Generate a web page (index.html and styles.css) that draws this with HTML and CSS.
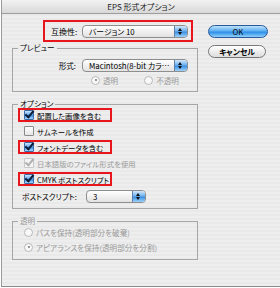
FILE: index.html
```html
<!DOCTYPE html>
<html lang="ja">
<head>
    <meta charset="UTF-8">
    <title>EPS 形式オプション</title>
    <link rel="stylesheet" href="styles.css">
</head>
<body>

<div class="window">
    <div class="titlebar">EPS 形式オプション</div>

    <div class="content">
        <div class="main">
            <!-- 互換性 -->
            <div class="compat mark">
                <span class="label">互換性:</span>
                <div class="popup wide"><span>バージョン 10</span><i class="arrows"></i></div>
            </div>

            <!-- プレビュー -->
            <div class="group preview">
                <span class="legend">プレビュー</span>
                <div class="field">
                    <span class="label">形式:</span>
                    <div class="popup wide"><span>Macintosh(8-bit カラ…</span><i class="arrows"></i></div>
                </div>
                <div class="radios">
                    <span class="radio on dim"><i></i>透明</span>
                    <span class="radio dim"><i></i>不透明</span>
                </div>
            </div>

            <!-- オプション -->
            <div class="group options">
                <span class="legend">オプション</span>
                <div class="check mark first"><i class="box on"></i>配置した画像を含む</div>
                <div class="check"><i class="box"></i>サムネールを作成</div>
                <div class="check mark"><i class="box on"></i>フォントデータを含む</div>
                <div class="check dim"><i class="box tick"></i>日本語版のファイル形式を使用</div>
                <div class="check mark"><i class="box on"></i>CMYK ポストスクリプト</div>
                <div class="field ps">
                    <span class="label">ポストスクリプト:</span>
                    <div class="popup narrow"><span>3</span><i class="arrows"></i></div>
                </div>
            </div>

            <!-- 透明 -->
            <div class="group transp">
                <span class="legend dim">透明</span>
                <span class="radio dim row"><i></i>パスを保持(透明部分を破棄)</span>
                <span class="radio on dim row"><i></i>アピアランスを保持(透明部分を分割)</span>
            </div>
        </div>

        <div class="buttons">
            <div class="btn ok">OK</div>
            <div class="btn cancel">キャンセル</div>
        </div>
    </div>
</div>

</body>
</html>
```

FILE: styles.css
```css
body {
    margin: 0;
    background: #ffffff;
    font-family: "Noto Sans CJK JP", "DejaVu Sans", sans-serif;
    font-size: 7.6px;
    font-feature-settings: "palt";
    color: #000;
}
.window {
    width: 279px;
    height: 287px;
    margin-left: 1px;
    border-left: 1px solid #9a9a9a;
    border-bottom: 1px solid #8c8c8c;
    box-sizing: border-box;
    background: repeating-linear-gradient(#eeeeee 0, #eeeeee 2px, #e9e9e9 2px, #e9e9e9 4px);
}
.titlebar {
    height: 14px;
    line-height: 13px;
    text-align: center;
    font-size: 8px;
    color: #222;
    background: linear-gradient(#f2f2f2, #d8d8d8);
    border-bottom: 1px solid #9c9c9c;
    box-sizing: border-box;
}
.content {
    display: flex;
}
.main {
    width: 186px;
    margin-left: 10px;
}
.mark {
    border: 2px solid #e8151d;
    box-sizing: border-box;
}
.label {
    white-space: nowrap;
}
.dim {
    color: #9a9a9a;
}

/* ポップアップ */
.compat {
    margin: 6px 0 0 31px;
    width: 150px;
    height: 22px;
    display: flex;
    align-items: center;
    padding-left: 6px;
}
.compat .label {
    width: 31px;
    font-size: 8px;
}
.popup {
    position: relative;
    height: 13px;
    border: 1px solid #8e8e8e;
    border-radius: 4px;
    box-sizing: border-box;
    background: linear-gradient(#ffffff, #f0f0f0 50%, #e2e2e2);
    display: flex;
    align-items: center;
    padding-left: 6px;
    font-size: 7.8px;
    white-space: nowrap;
    overflow: hidden;
}
.popup.wide {
    width: 106px;
}
.popup.narrow {
    width: 60px;
}
.arrows {
    position: absolute;
    right: 0;
    top: 0;
    bottom: 0;
    width: 12px;
    border-left: 1px solid #5d7ea8;
    background: linear-gradient(#d3e8fb, #6fb2ef 45%, #3b8ee0 55%, #9fd3fb);
}
.arrows::before, .arrows::after {
    content: "";
    position: absolute;
    left: 3px;
    border-left: 2.5px solid transparent;
    border-right: 2.5px solid transparent;
}
.arrows::before {
    top: 2px;
    border-bottom: 3px solid #111;
}
.arrows::after {
    bottom: 2px;
    border-top: 3px solid #111;
}

/* グループ */
.group {
    border: 1px solid #a6a6a6;
    box-sizing: border-box;
    padding-left: 5px;
}
.legend {
    display: block;
    width: max-content;
    height: 10px;
    line-height: 10px;
    margin-top: -6px;
    padding: 0 2px;
    background: #ececec;
}
.preview {
    margin-top: 6px;
    height: 44px;
}
.field {
    display: flex;
    align-items: center;
    margin-top: 6px;
}
.preview .field .label {
    width: 58px;
    text-align: right;
    margin-right: 6px;
}
.radios {
    display: flex;
    margin: 3px 0 0 73px;
    gap: 26px;
}
.radio {
    display: flex;
    align-items: center;
    height: 10px;
    white-space: nowrap;
}
.radio i {
    width: 7px;
    height: 7px;
    border: 1px solid #b8b8b8;
    border-radius: 50%;
    margin-right: 3px;
    background: #f8f8f8;
    position: relative;
}
.radio.on i::after {
    content: "";
    position: absolute;
    left: 2.5px;
    top: 2.5px;
    width: 2px;
    height: 2px;
    border-radius: 50%;
    background: #777;
}
.options {
    margin-top: 12px;
    height: 105px;
}
.check {
    display: flex;
    align-items: center;
    width: 94px;
    height: 14px;
    margin-top: 2px;
    padding-left: 4px;
    border: 2px solid transparent;
    box-sizing: border-box;
    white-space: nowrap;
    font-size: 7.4px;
}
.check.first {
    margin-top: -1px;
}
.check.mark {
    border-color: #e8151d;
}
.box {
    width: 8px;
    height: 8px;
    border: 1px solid #8a8a8a;
    border-radius: 1px;
    margin-right: 3px;
    background: linear-gradient(#ffffff, #e6e6e6);
    position: relative;
    flex: none;
}
.box.on {
    border-color: #3d6aa8;
    background: linear-gradient(#cfe6fb, #5aa6ee 50%, #3a8ce0 55%, #a9d6fb);
}
.box.tick {
    border-color: #c8c8c8;
    background: #f4f4f4;
}
.box.on::after, .box.tick::after {
    content: "";
    position: absolute;
    left: 2px;
    top: -2px;
    width: 3px;
    height: 7px;
    border-right: 2px solid #0d1d3a;
    border-bottom: 2px solid #0d1d3a;
    transform: rotate(40deg);
}
.box.tick::after {
    border-color: #b0b0b0;
}
.ps {
    margin-top: 4px;
}
.ps .label {
    width: 60px;
    padding-left: 4px;
    margin-right: 4px;
}
.transp {
    margin-top: 12px;
    height: 39px;
}
.radio.row {
    margin: 1px 0 0 6px;
}
.radio.row + .radio.row {
    margin-top: 5px;
}

/* ボタン */
.buttons {
    margin-left: 10px;
    padding-top: 11px;
}
.btn {
    height: 13px;
    line-height: 12px;
    border-radius: 7px;
    text-align: center;
    box-sizing: border-box;
    font-size: 7.8px;
}
.ok {
    width: 60px;
    border: 1px solid #2b5a9a;
    background: linear-gradient(#bfe2fb, #5fb0f2 45%, #2b8ee8 55%, #8fd0fb);
    color: #0a0a0a;
}
.cancel {
    width: 58px;
    margin-top: 7px;
    border: 1px solid #777;
    background: linear-gradient(#ffffff, #eeeeee 50%, #dcdcdc);
    font-weight: bold;
}
```
